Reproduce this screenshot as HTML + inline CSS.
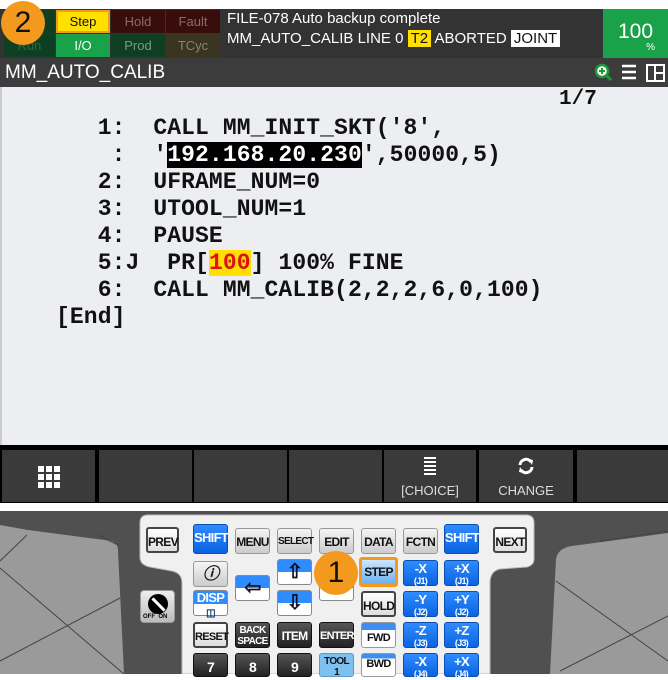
<!DOCTYPE html>
<html><head><meta charset="utf-8"><style>
*{margin:0;padding:0;box-sizing:border-box}
body{width:668px;height:674px;overflow:hidden;background:#fff;position:relative;font-family:"Liberation Sans",sans-serif}
.a{position:absolute}
.st{position:absolute;height:23px;font-size:13px;text-align:center;line-height:23px}
.code{position:absolute;left:56px;top:115px;font-family:"Liberation Mono",monospace;font-size:23px;line-height:27px;color:#111;white-space:pre;font-weight:bold;letter-spacing:0.1px}
.fk{position:absolute;top:450px;height:52px;background:#3a3a3a;color:#ddd;font-size:13px;text-align:center}
.k{position:absolute;width:35px;height:26px;border-radius:3px;font-family:"Liberation Sans",sans-serif;font-weight:bold;font-size:12px;text-align:center;line-height:26px;letter-spacing:-0.7px}
.w{background:linear-gradient(#fff,#ddd);border:2px solid #444;color:#111}
.g{background:linear-gradient(#f4f4f4,#ccc);border:1px solid #999;color:#111}
.b{background:linear-gradient(#2f8cff,#0b63e0);color:#fff;border:1px solid #0a4fb0}
.d{background:linear-gradient(#555,#222);color:#fff;border:1px solid #111}
.j{line-height:11px;padding-top:2px;font-size:13px}
.j small{font-size:9px}
.circ{position:absolute;border-radius:50%;background:#f39a1e;color:#111;font-size:30px;text-align:center}
</style></head><body>
<div class="a" style="left:0;top:9px;width:668px;height:49px;background:#333"></div>
<div class="st" style="left:4px;top:34px;width:51px;background:#0e3f23;color:#2a6a40">Run</div>
<div class="st" style="left:4px;top:10px;width:51px;background:#0e3f23"></div>
<div class="st" style="left:56px;top:10px;width:54px;background:#ffe000;border:2px solid #f39a1e;line-height:19px;color:#111">Step</div>
<div class="st" style="left:111px;top:10px;width:54px;background:#3a0d0d;color:#8a6a6a">Hold</div>
<div class="st" style="left:166px;top:10px;width:54px;background:#3a0d0d;color:#8a6a6a">Fault</div>
<div class="st" style="left:56px;top:34px;width:54px;background:#1aa24a;color:#fff">I/O</div>
<div class="st" style="left:111px;top:34px;width:54px;background:#0e3f23;color:#7a9a80">Prod</div>
<div class="st" style="left:166px;top:34px;width:54px;background:#3a3520;color:#8a8570">TCyc</div>
<div class="a" style="left:227px;top:9px;color:#fff;font-size:15px;line-height:20px">FILE-078 Auto backup complete</div>
<div class="a" style="left:227px;top:29px;color:#fff;font-size:15px;line-height:20px">MM_AUTO_CALIB LINE 0 <span style="background:#ffe000;color:#111;padding:0 3px">T2</span> ABORTED <span style="background:#fff;color:#111;padding:0 3px">JOINT</span></div>
<div class="a" style="left:603px;top:9px;width:65px;height:49px;background:#1aa24a;color:#fff;text-align:center">
 <div style="font-size:21px;margin-top:12px;line-height:22px">100</div><div style="font-size:10px;text-align:right;padding-right:13px;line-height:10px">%</div></div>
<div class="circ" style="left:1px;top:1px;width:44px;height:44px;line-height:44px">2</div>
<div class="a" style="left:0;top:58px;width:668px;height:29px;background:#3c3c3c;color:#fff;font-size:19px;line-height:29px;padding-left:5px">MM_AUTO_CALIB</div>
<svg class="a" style="left:592px;top:62px" width="76" height="22">
<circle cx="10" cy="9" r="6" fill="#fff" stroke="#1a9a3a" stroke-width="2.5"/><path d="M7 9h6M10 6v6" stroke="#1a9a3a" stroke-width="2"/><path d="M14 13l5 5" stroke="#1a9a3a" stroke-width="3"/>
<path d="M30 4h14M30 10h14M30 16h14" stroke="#fff" stroke-width="2.5"/>
<rect x="55" y="3" width="17" height="16" fill="none" stroke="#fff" stroke-width="2"/><path d="M63 3v16M63 11h9" stroke="#fff" stroke-width="2"/>
</svg>
<div class="a" style="left:0;top:87px;width:668px;height:358px;background:#eceef2;border-left:2px solid #ccc"></div>
<div class="a" style="left:559px;top:88px;font-family:'Liberation Mono',monospace;font-size:21px;font-weight:bold;color:#111">1/7</div>
<div class="code">   1:  CALL MM_INIT_SKT('8',
    :  '<span style="background:#000;color:#fff">192.168.20.230</span>',50000,5)
   2:  UFRAME_NUM=0
   3:  UTOOL_NUM=1
   4:  PAUSE
   5:J  PR[<span style="background:#ffe000;color:#e01010">100</span>] 100% FINE
   6:  CALL MM_CALIB(2,2,2,6,0,100)
[End]</div>
<div class="a" style="left:0;top:445px;width:668px;height:58px;background:#000"></div>
<div class="fk" style="left:2px;width:93px"><svg width="22" height="22" style="margin-top:16px"><g fill="#fff"><rect x="0" y="0" width="6" height="6"/><rect x="8" y="0" width="6" height="6"/><rect x="16" y="0" width="6" height="6"/><rect x="0" y="8" width="6" height="6"/><rect x="8" y="8" width="6" height="6"/><rect x="16" y="8" width="6" height="6"/><rect x="0" y="16" width="6" height="6"/><rect x="8" y="16" width="6" height="6"/><rect x="16" y="16" width="6" height="6"/></g></svg></div>
<div class="fk" style="left:99px;width:93px"></div>
<div class="fk" style="left:194px;width:93px"></div>
<div class="fk" style="left:289px;width:93px"></div>
<div class="fk" style="left:384px;width:92px"><svg width="16" height="20" style="margin-top:6px"><path d="M2 2h12M2 6h12M2 10h12M2 14h12M2 18h12" stroke="#fff" stroke-width="2"/></svg><div style="margin-top:4px">[CHOICE]</div></div>
<div class="fk" style="left:479px;width:94px"><svg width="18" height="18" style="margin-top:7px"><path d="M3 8a6 6 0 0 1 11-3M15 10a6 6 0 0 1-11 3" stroke="#fff" stroke-width="3" fill="none"/><path d="M11 2l5 1-1 5zM7 16l-5-1 1-5z" fill="#fff"/></svg><div style="margin-top:5px">CHANGE</div></div>
<div class="fk" style="left:577px;width:91px"></div>
<div class="a" style="left:0;top:503px;width:668px;height:8px;background:#fff"></div>
<svg class="a" style="left:0;top:511px" width="668" height="163">
<rect width="668" height="163" fill="#505050"/>
<path d="M0 14L28 19L112 30Q118 32 118 40L124 163L0 163Z" fill="#9a9a9a"/>
<path d="M0 50L27 24M0 57L124 163M0 150L120 87M98 24L118 34" stroke="#444" stroke-width="1" fill="none"/>
<path d="M668 22L572 35Q558 37 556 48L550 163L668 163Z" fill="#9a9a9a"/>
<path d="M556 70L668 150M560 160L668 105M600 30L668 20" stroke="#444" stroke-width="1" fill="none"/>
<path d="M148 4H526Q534 4 534 12V48Q534 54 527 56L500 58Q490 60 490 72V163H182V72Q182 62 172 60L150 56Q140 54 140 46V12Q140 4 148 4Z" fill="#f0f0f0" stroke="#bbb"/>
</svg>
<div class="k w" style="left:146px;top:527px;width:33px">PREV</div>
<div class="k b" style="left:193px;top:524px;height:30px;font-size:13px">SHIFT</div>
<div class="k g" style="left:235px;top:528px">MENU</div>
<div class="k g" style="left:277px;top:528px;font-size:10px">SELECT</div>
<div class="k g" style="left:319px;top:528px">EDIT</div>
<div class="k g" style="left:361px;top:528px">DATA</div>
<div class="k g" style="left:403px;top:528px">FCTN</div>
<div class="k b" style="left:444px;top:524px;height:30px;font-size:13px">SHIFT</div>
<div class="k w" style="left:493px;top:527px;width:34px">NEXT</div>
<div class="k g" style="left:193px;top:561px;font-style:italic;font-family:'Liberation Serif',serif;font-size:16px">ⓘ</div>
<div class="k" style="left:235px;top:575px;height:26px;background:linear-gradient(#2f8cff 50%,#fff 50%);border:1px solid #888;color:#112;font-size:20px;line-height:24px">⇦</div>
<div class="k" style="left:277px;top:559px;background:linear-gradient(#2f8cff 50%,#fff 50%);border:1px solid #888;color:#112;font-size:20px;line-height:24px">⇧</div>
<div class="k" style="left:277px;top:590px;background:linear-gradient(#2f8cff 50%,#fff 50%);border:1px solid #888;color:#112;font-size:20px;line-height:24px">⇩</div>
<div class="k" style="left:319px;top:575px;background:linear-gradient(#2f8cff 50%,#fff 50%);border:1px solid #888;color:#112;font-size:20px;line-height:24px">⇨</div>
<div class="k" style="left:359px;top:557px;width:39px;height:30px;border:3px solid #f39a1e;background:linear-gradient(#cde6ff,#6ab0f0);color:#111;line-height:24px">STEP</div>
<div class="k j b" style="left:403px;top:560px">-X<br><small>(J1)</small></div>
<div class="k j b" style="left:444px;top:560px">+X<br><small>(J1)</small></div>
<div class="k" style="left:193px;top:590px;background:linear-gradient(#2f8cff 55%,#fff 55%);border:1px solid #888;color:#fff;line-height:14px;font-size:13px">DISP<br><span style="color:#036;font-size:10px">◫</span></div>
<div class="k w" style="left:361px;top:591px">HOLD</div>
<div class="k j b" style="left:403px;top:591px">-Y<br><small>(J2)</small></div>
<div class="k j b" style="left:444px;top:591px">+Y<br><small>(J2)</small></div>
<div class="k w" style="left:193px;top:622px;font-size:11px">RESET</div>
<div class="k d" style="left:235px;top:622px;line-height:11px;font-size:10px;padding-top:2px">BACK<br>SPACE</div>
<div class="k d" style="left:277px;top:622px">ITEM</div>
<div class="k d" style="left:319px;top:622px;font-size:11px">ENTER</div>
<div class="k g" style="left:361px;top:622px;background:linear-gradient(#3d8ef0 30%,#fff 30%);line-height:30px;font-size:11px">FWD</div>
<div class="k j b" style="left:403px;top:622px">-Z<br><small>(J3)</small></div>
<div class="k j b" style="left:444px;top:622px">+Z<br><small>(J3)</small></div>
<div class="k d" style="left:193px;top:653px;height:24px;font-size:14px">7</div>
<div class="k d" style="left:235px;top:653px;height:24px;font-size:14px">8</div>
<div class="k d" style="left:277px;top:653px;height:24px;font-size:14px">9</div>
<div class="k" style="left:319px;top:653px;height:24px;background:#7ec0f0;color:#111;line-height:11px;font-size:10px;padding-top:2px;border:1px solid #5a9ad0">TOOL<br>1</div>
<div class="k g" style="left:361px;top:653px;height:24px;background:linear-gradient(#3d8ef0 20%,#fff 20%);font-size:11px;line-height:20px">BWD</div>
<div class="k j b" style="left:403px;top:653px;height:24px">-X<br><small>(J4)</small></div>
<div class="k j b" style="left:444px;top:653px;height:24px">+X<br><small>(J4)</small></div>
<div class="a" style="left:140px;top:590px;width:35px;height:33px;background:linear-gradient(#eee,#bbb);border-radius:4px;border:1px solid #999">
<div style="position:absolute;left:7px;top:3px;width:20px;height:20px;border-radius:50%;background:#000"></div>
<div style="position:absolute;left:16px;top:5px;width:3px;height:17px;background:#fff;transform:rotate(-45deg)"></div>
<div style="position:absolute;left:2px;top:23px;font-size:6px;font-weight:bold;white-space:nowrap">OFF&nbsp;&nbsp;ON</div></div>
<div class="circ" style="left:314px;top:551px;width:44px;height:44px;line-height:44px">1</div>
</body></html>
